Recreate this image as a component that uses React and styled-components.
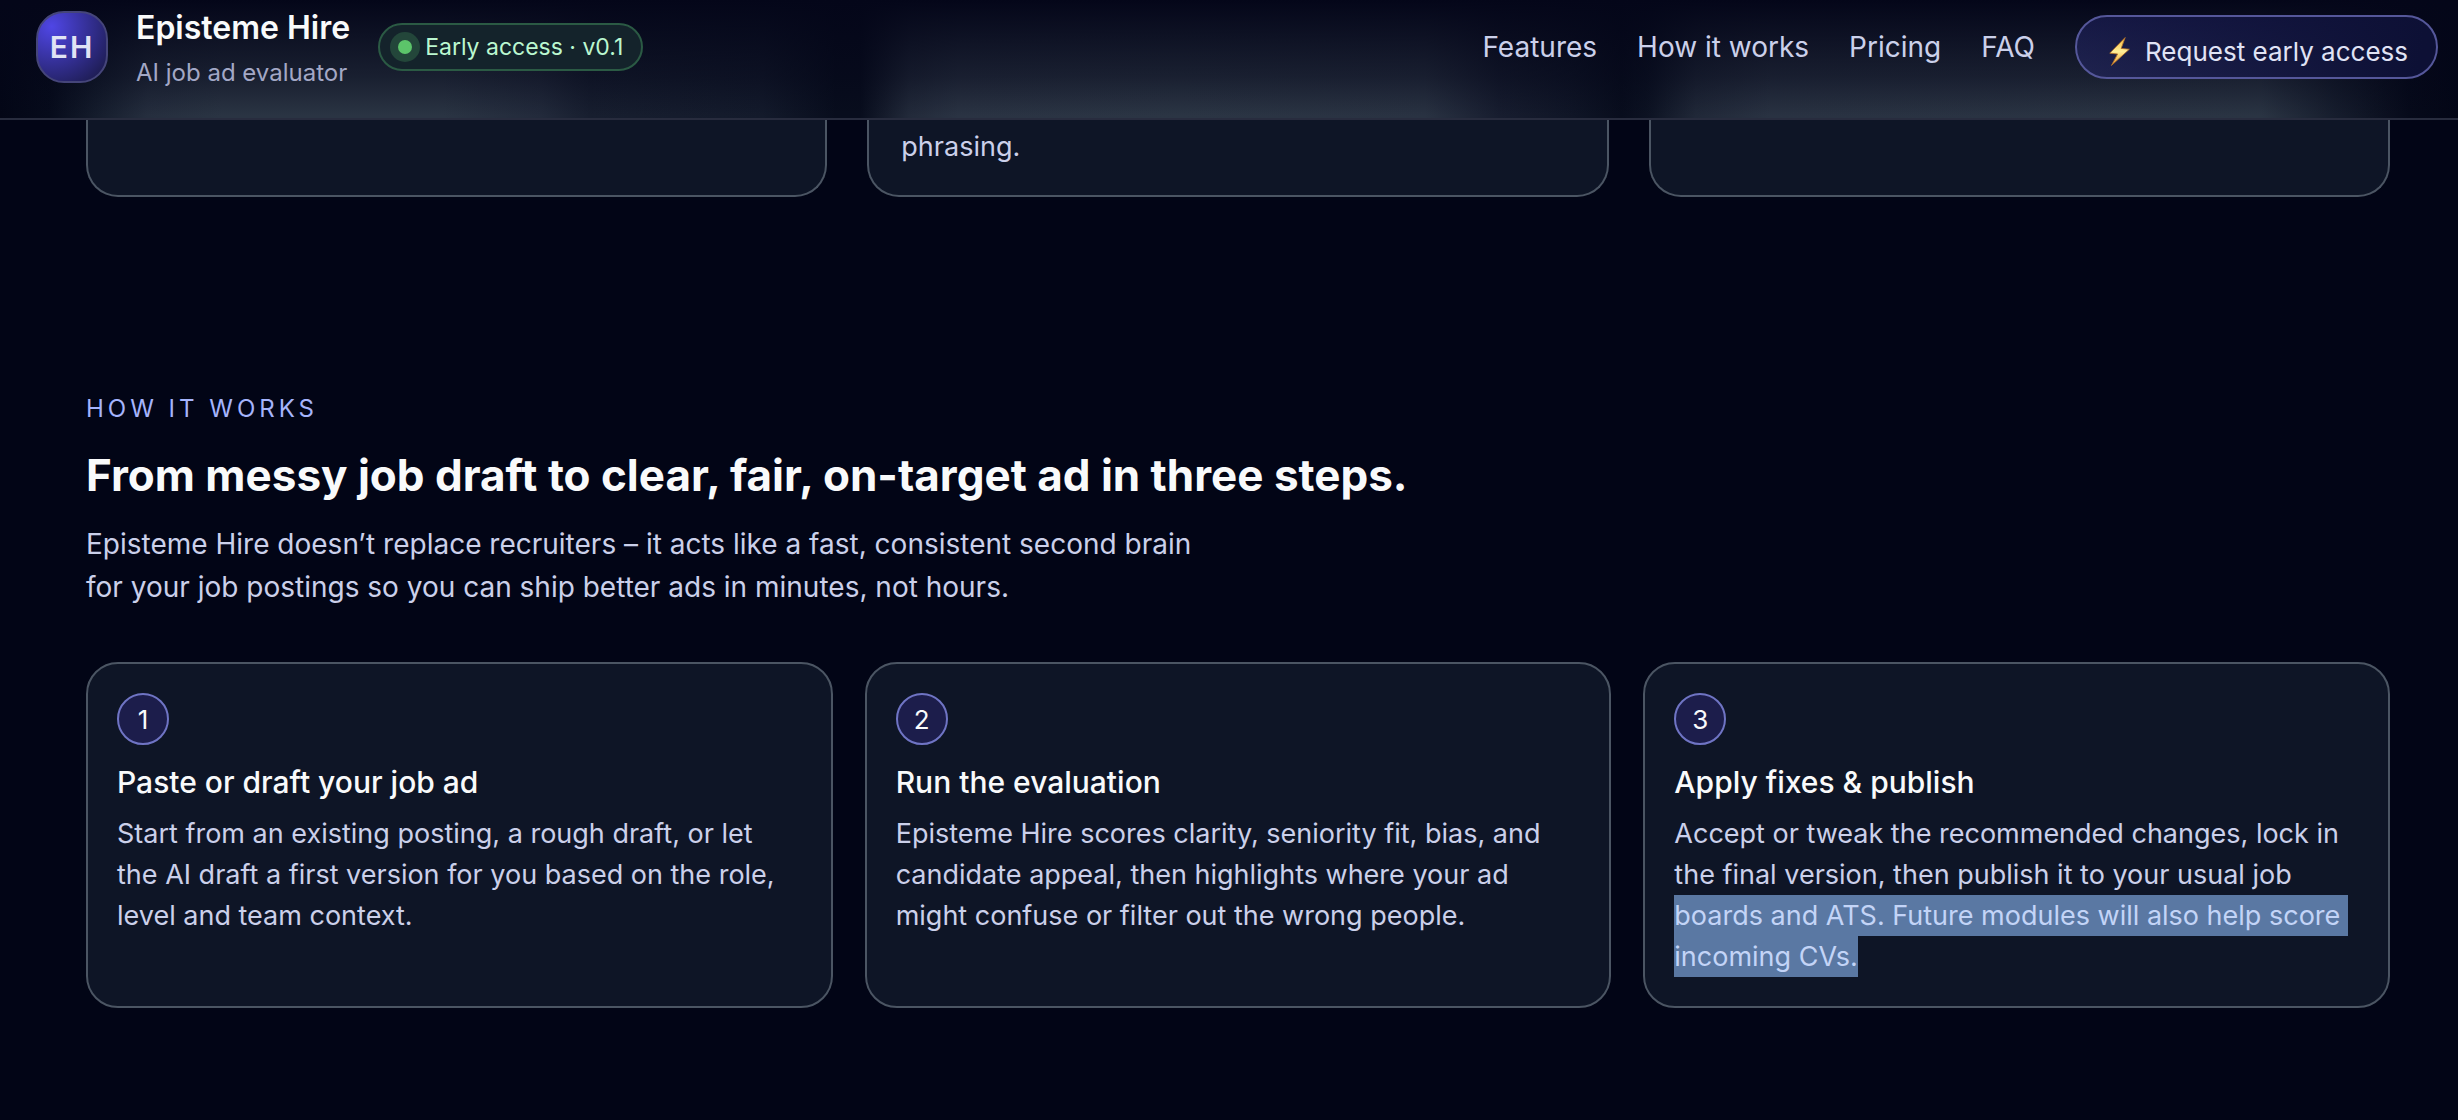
import React from 'react';
import styled, { createGlobalStyle } from 'styled-components';

const COLORS = {
  page: '#020516',
  card: '#0e1526',
  cardBorder: '#4b5563',
  heading: '#f9fafb',
  text: '#cbd0ea',
  muted: '#a3a8c6',
  accent: '#a5b4fc',
  indigo: '#6f74c4',
  highlight: '#5a78a3',
};

const FEATURES = [
  { id: 'score', tail: '' },
  { id: 'bias', tail: 'phrasing.' },
  { id: 'rewrite', tail: '' },
];

const STEPS = [
  {
    title: 'Paste or draft your job ad',
    body: 'Start from an existing posting, a rough draft, or let the AI draft a first version for you based on the role, level and team context.',
  },
  {
    title: 'Run the evaluation',
    body: 'Episteme Hire scores clarity, seniority fit, bias, and candidate appeal, then highlights where your ad might confuse or filter out the wrong people.',
  },
  {
    title: 'Apply fixes & publish',
    body: 'Accept or tweak the recommended changes, lock in the final version, then publish it to your usual job ',
    marked: ['boards and ATS. Future modules will also help score\u00a0', 'incoming CVs.'],
  },
];

const App = () => {
  return <>
    <GlobalStyle />
    <Header>
      <Brand href="#top">
        <Logo>EH</Logo>
        <BrandText>
          <BrandName>Episteme Hire</BrandName>
          <Tagline>AI job ad evaluator</Tagline>
        </BrandText>
      </Brand>
      <Status>
        <Dot />
        Early access · v0.1
      </Status>
      <Nav>
        <NavLink href="#features">Features</NavLink>
        <NavLink href="#how">How it works</NavLink>
        <NavLink href="#pricing">Pricing</NavLink>
        <NavLink href="#faq">FAQ</NavLink>
        <RequestButton type="button">
          <Bolt />
          Request early access
        </RequestButton>
      </Nav>
    </Header>
    <Main>
      <FeatureGrid id="features">
        {FEATURES.map(({ id, tail }) => <FeatureCard key={id}>{tail}</FeatureCard>)}
      </FeatureGrid>
      <Section id="how">
        <Eyebrow>How it works</Eyebrow>
        <Title>From messy job draft to clear, fair, on-target ad in three steps.</Title>
        <Lede>
          Episteme Hire doesn’t replace recruiters – it acts like a fast, consistent second brain
          for your job postings so you can ship better ads in minutes, not hours.
        </Lede>
        <StepGrid>
          {STEPS.map((step, index) => <Step key={step.title} number={index + 1} {...step} />)}
        </StepGrid>
      </Section>
    </Main>
  </>;
};

const Step = ({ number, title, body, marked = [] }) => {
  return <StepCard>
    <StepNumber>{number}</StepNumber>
    <StepTitle>{title}</StepTitle>
    <StepText>
      {body}
      {marked.map(line => <Marked key={line}>{line}</Marked>)}
    </StepText>
  </StepCard>;
};

const Bolt = () => {
  return <BoltIcon viewBox="0 0 20 28" aria-hidden="true">
    <defs>
      <linearGradient id="bolt" x1="0" y1="0" x2="0" y2="1">
        <stop offset="0" stopColor="#f5b93c" />
        <stop offset="0.5" stopColor="#ffee96" />
        <stop offset="1" stopColor="#ee9a2a" />
      </linearGradient>
    </defs>
    <path
      d="M15.500 0.500 L0.600 15.600 L8.200 16.400 L2.200 27.500 L19.500 11.800 L11.600 11 Z"
      fill="url(#bolt)"
      stroke="#b3702a"
      strokeWidth="0.800"
      strokeLinejoin="round"
    />
  </BoltIcon>;
};

const GlobalStyle = createGlobalStyle`
* {
  box-sizing: border-box;
}
body {
  margin: 0;
  min-height: 100vh;
  background-color: ${COLORS.page};
  color: ${COLORS.text};
  font-family: Inter, 'Liberation Sans', sans-serif;
}
h2, h3, p, ol {
  margin: 0;
  padding: 0;
}
`

const Header = styled.header`
position: sticky;
top: 0;
z-index: 1;
display: flex;
align-items: center;
height: 120px;
padding: 0 20px 24px 36px;
border-bottom: 2px solid #282c3e;
background:
  linear-gradient(to bottom, #040619 0%, rgba(4, 6, 25, 0.75) 30%, rgba(4, 6, 25, 0.45) 65%, transparent 98%),
  linear-gradient(to right,
    #030616 0%, #060b1b 2%, #151d2d 4%, #252e3e 6%, #2a3443 9%, #2a3443 18%, #222a3b 22%, #171e2f 24%, #131a2b 31%,
    #080d1d 34%, #080d1d 35%, #222a3a 37%, #2a3343 39%, #2b3544 48%, #293242 58%, #171d2f 61%, #0f1526 64%,
    #080d1d 66%, #0c1222 67%, #202838 69%, #293242 72%, #2a3443 92%, #161d2d 95%, #060a1a 98%, #030616 100%);
`

const Brand = styled.a`
display: flex;
align-items: center;
gap: 28px;
text-decoration: none;
`

const Logo = styled.span`
display: grid;
place-items: center;
width: 72px;
height: 72px;
border: 2px solid #45457a;
border-radius: 28px;
background: radial-gradient(circle at 20% 20%, #4f46e5, #17173f 100%);
color: #e0e3f5;
font-size: 30px;
font-weight: 600;
letter-spacing: 2px;
`

const BrandText = styled.span`
display: flex;
flex-direction: column;
padding-top: 8px;
`

const BrandName = styled.span`
color: ${COLORS.heading};
font-size: 32px;
font-weight: 600;
line-height: 44px;
`

const Tagline = styled.span`
color: ${COLORS.muted};
font-size: 24px;
line-height: 46px;
`

const Status = styled.span`
display: flex;
align-items: center;
gap: 13px;
height: 48px;
margin-left: 28px;
padding: 0 18px;
border: 2px solid #2b5a44;
border-radius: 24px;
background-color: #14232b;
color: #bbf7d0;
font-size: 23px;
`

const Dot = styled.span`
width: 14px;
height: 14px;
border-radius: 50%;
background-color: #5cc46a;
box-shadow: 0 0 0 8px #23463a;
`

const Nav = styled.nav`
display: flex;
align-items: center;
gap: 40px;
margin-left: auto;
`

const NavLink = styled.a`
color: ${COLORS.text};
font-size: 28px;
text-decoration: none;
`

const RequestButton = styled.button`
display: flex;
align-items: center;
gap: 15px;
height: 64px;
padding: 8px 28px 0 32px;
border: 2px solid #55579a;
border-radius: 32px;
background: linear-gradient(100deg, rgba(32, 34, 92, 0.3), #0d1035 95%), linear-gradient(to bottom, #11143a, #20254a);
color: #e0e3f5;
font-family: inherit;
font-size: 26px;
`

const BoltIcon = styled.svg`
width: 21px;
height: 29px;
`

const Main = styled.main`
padding: 0 68px 0 86px;
`

const FeatureGrid = styled.section`
display: grid;
grid-template-columns: repeat(3, 1fr);
gap: 40px;
`

const FeatureCard = styled.div`
min-height: 77px;
padding: 6px 32px 28px;
border: 2px solid ${COLORS.cardBorder};
border-top: none;
border-radius: 0 0 32px 32px;
background-color: ${COLORS.card};
font-size: 27px;
line-height: 41px;
`

const Section = styled.section`
padding: 193px 0 112px;
`

const Eyebrow = styled.p`
color: ${COLORS.accent};
font-size: 24px;
line-height: 38px;
letter-spacing: 4px;
text-transform: uppercase;
`

const Title = styled.h2`
margin-top: 15px;
color: ${COLORS.heading};
font-size: 44px;
font-weight: 700;
line-height: 64px;
`

const Lede = styled.p`
max-width: 1140px;
margin-top: 16px;
font-size: 28px;
line-height: 43px;
`

const StepGrid = styled.ol`
display: grid;
grid-template-columns: repeat(3, 1fr);
gap: 32px;
margin-top: 53px;
list-style: none;
`

const StepCard = styled.li`
padding: 29px;
border: 2px solid ${COLORS.cardBorder};
border-radius: 32px;
background-color: ${COLORS.card};
`

const StepNumber = styled.span`
display: grid;
place-items: center;
width: 52px;
height: 52px;
border: 2px solid ${COLORS.indigo};
border-radius: 50%;
background-color: #1c1d4b;
color: ${COLORS.heading};
font-size: 26px;
`

const StepTitle = styled.h3`
margin: 15px 0 9px;
color: ${COLORS.heading};
font-size: 30px;
font-weight: 500;
line-height: 44px;
`

const StepText = styled.p`
max-width: 680px;
font-size: 27px;
line-height: 41px;
`

const Marked = styled.mark`
display: block;
width: fit-content;
background-color: ${COLORS.highlight};
color: #c3d4f7;
`

export default App;
